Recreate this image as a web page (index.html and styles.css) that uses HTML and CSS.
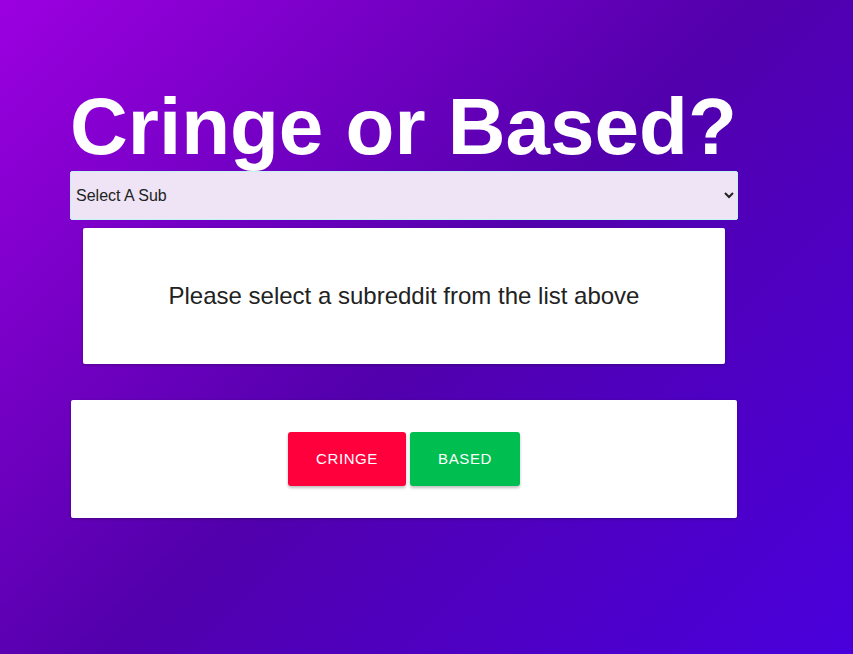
FILE: index.html
```html
<!DOCTYPE html>
<html>
<head>
<meta charset="utf-8">
<link rel="stylesheet" href="styles.css">
</head>
<body>
<div class="page">
  <div class="wrap">
    <h1 class="title">Cringe or Based?</h1>
    <select class="sub-select">
      <option>Select A Sub</option>
    </select>
    <div class="card post-card">
      <p class="post-text">Please select a subreddit from the list above</p>
    </div>
    <div class="card vote-card">
      <button class="btn btn-cringe">Cringe</button>
      <button class="btn btn-based">Based</button>
    </div>
  </div>
</div>
</body>
</html>
```
FILE: styles.css
```css
html, body {
  margin: 0;
  padding: 0;
  height: 100%;
}
body {
  font-family: "Liberation Sans", Arial, sans-serif;
  background: linear-gradient(135deg, #9c00e0 0%, #5200ac 50%, #4a00dc 100%);
  background-attachment: fixed;
  min-height: 654px;
}
.page {
  padding: 82px 0 0 70px;
}
.wrap {
  width: 668px;
  display: flex;
  flex-direction: column;
}
.title {
  margin: 0;
  font-size: 80px;
  line-height: 89px;
  font-weight: 700;
  color: #ffffff;
  white-space: nowrap;
}
.sub-select {
  margin: 0;
  width: 668px;
  height: 49px;
  background: #eee4f5;
  border: 1px solid #c4f4f0;
  border-radius: 2px;
  font-family: "Liberation Sans", Arial, sans-serif;
  font-size: 16px;
  color: #222;
  padding: 0 4px 0 1px;
}
.card {
  background: #ffffff;
  border-radius: 2px;
  box-shadow: 0 1px 3px rgba(0,0,0,0.25);
}
.post-card {
  margin: 8px 13px 0 13px;
  height: 136px;
  display: flex;
  align-items: center;
  justify-content: center;
}
.post-text {
  margin: 0;
  font-size: 24px;
  color: #222;
}
.vote-card {
  margin: 36px 1px 0 1px;
  height: 118px;
  display: flex;
  align-items: center;
  justify-content: center;
  gap: 4px;
}
.btn {
  height: 54px;
  border: none;
  border-radius: 3px;
  color: #fff;
  font-family: "Liberation Sans", Arial, sans-serif;
  font-size: 15px;
  letter-spacing: 0.6px;
  text-transform: uppercase;
  padding: 0 0 2px 0;
  box-shadow: 0 2px 3px rgba(0,0,0,0.25);
  cursor: pointer;
}
.btn-cringe {
  width: 118px;
  background: #ff003c;
}
.btn-based {
  width: 110px;
  background: #00bf50;
}
```
